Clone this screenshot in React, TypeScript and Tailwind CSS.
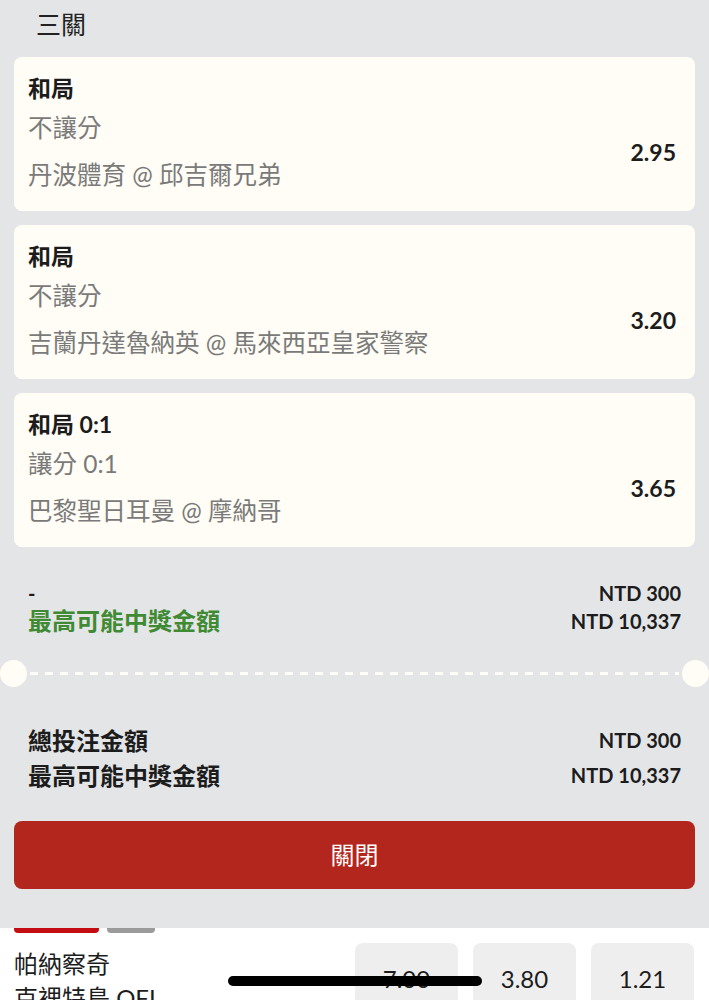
import React from 'react';

type Leg = {
    pick: string;
    market: string;
    match: string;
    odds: string;
};

const legs: Leg[] = [
    { pick: '和局', market: '不讓分', match: '丹波體育 @ 邱吉爾兄弟', odds: '2.95' },
    { pick: '和局', market: '不讓分', match: '吉蘭丹達魯納英 @ 馬來西亞皇家警察', odds: '3.20' },
    { pick: '和局 0:1', market: '讓分 0:1', match: '巴黎聖日耳曼 @ 摩納哥', odds: '3.65' },
];

const LegCard: React.FC<{ leg: Leg }> = ({ leg }) => (
    <div className="h-[154px] bg-[#fffdf5] rounded-lg pl-[14px] pr-[19px] flex items-center justify-between">
        <div className="flex flex-col self-stretch pt-[16px]">
            <div className="text-[23px] leading-[30px] font-bold text-[#1c1c1c]">{leg.pick}</div>
            <div className="text-[24.5px] leading-[30px] mt-[10px] text-[#7a7a7a]">{leg.market}</div>
            <div className="text-[24.5px] leading-[30px] mt-[17px] text-[#7a7a7a]">{leg.match}</div>
        </div>
        <div className="mt-[36px] text-[23px] font-bold text-[#1c1c1c]">{leg.odds}</div>
    </div>
);

const App: React.FC = () => {
    return (
        <div className="w-[709px] h-[1000px] overflow-hidden relative bg-white font-['Lato','Noto_Sans_CJK_TC',sans-serif]">
            {/* bet slip sheet */}
            <div className="bg-[#e4e5e7] px-[14px] pt-[8px] pb-[39px]">
                <h1 className="ml-[22px] text-[25px] leading-[32px] text-[#222]">三關</h1>

                <div className="mt-[17px] flex flex-col gap-[14px]">
                    {legs.map((leg, i) => (
                        <LegCard key={i} leg={leg} />
                    ))}
                </div>

                <div className="mt-[32px] grid grid-cols-[1fr_auto] px-[14px]">
                    <div className="h-[28px] leading-[28px] text-[20px] font-bold text-[#1c1c1c]">-</div>
                    <div className="h-[28px] leading-[28px] text-[20px] font-bold text-[#1c1c1c] text-right">NTD 300</div>
                    <div className="h-[28px] leading-[28px] text-[24px] font-bold text-[#3f8a33]">最高可能中獎金額</div>
                    <div className="h-[28px] leading-[28px] text-[20px] font-bold text-[#1c1c1c] text-right">NTD 10,337</div>
                </div>

                <div className="-mx-[14px] mt-[25px] flex items-center">
                    <div className="w-[27px] h-[27px] rounded-full bg-[#fffdf5] shrink-0" />
                    <div className="flex-1 h-[3px] mx-[3px] bg-[repeating-linear-gradient(to_right,#fffdf5_0_8px,transparent_8px_15px)]" />
                    <div className="w-[27px] h-[27px] rounded-full bg-[#fffdf5] shrink-0" />
                </div>

                <div className="mt-[36px] grid grid-cols-[1fr_auto] px-[14px]">
                    <div className="h-[35px] leading-[35px] text-[24px] font-bold text-[#1c1c1c]">總投注金額</div>
                    <div className="h-[35px] leading-[35px] text-[20px] font-bold text-[#1c1c1c] text-right">NTD 300</div>
                    <div className="h-[35px] leading-[35px] text-[24px] font-bold text-[#1c1c1c]">最高可能中獎金額</div>
                    <div className="h-[35px] leading-[35px] text-[20px] font-bold text-[#1c1c1c] text-right">NTD 10,337</div>
                </div>

                <button className="mt-[28px] w-full h-[68px] rounded-lg bg-[#b3261e] text-white text-[24px]">
                    關閉
                </button>
            </div>

            {/* page underneath */}
            <div className="bg-white">
                <div className="flex gap-[8px] px-[14px]">
                    <div className="w-[85px] h-[5px] rounded-b bg-[#c40d12]" />
                    <div className="w-[48px] h-[5px] rounded-b bg-[#9b9b9b]" />
                </div>
                <div className="flex items-start justify-between pl-[14px] pr-[15px]">
                    <div className="mt-[14px] text-[24px] leading-[34px] text-[#1c1c1c]">
                        <div>帕納察奇</div>
                        <div>克裡特島 OFI</div>
                    </div>
                    <div className="mt-[10px] flex gap-[15px]">
                        {['7.00', '3.80', '1.21'].map(o => (
                            <div key={o} className="w-[103px] h-[72px] rounded-lg bg-[#eeeeee] flex items-center justify-center text-[24px] text-[#1c1c1c]">
                                {o}
                            </div>
                        ))}
                    </div>
                </div>
            </div>

            {/* home indicator */}
            <div className="absolute left-[228px] top-[976px] w-[254px] h-[10px] rounded-full bg-black" />
        </div>
    );
};

export default App;
